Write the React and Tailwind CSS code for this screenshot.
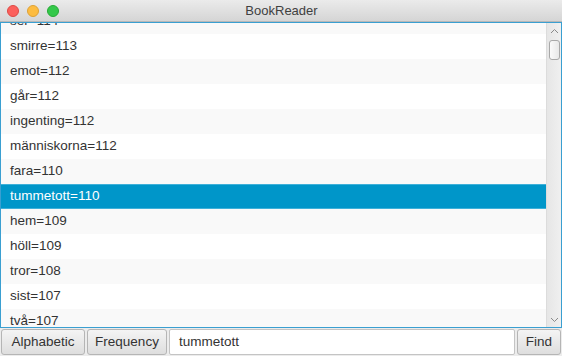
const words = [
  "ser=114",
  "smirre=113",
  "emot=112",
  "går=112",
  "ingenting=112",
  "människorna=112",
  "fara=110",
  "tummetott=110",
  "hem=109",
  "höll=109",
  "tror=108",
  "sist=107",
  "två=107",
];

const App = () => {
  const selected = "tummetott=110";

  return (
    <div
      className="w-[562px] h-[356px] flex flex-col bg-[#ececec] overflow-hidden text-[13.5px] text-[#333]"
      style={{ fontFamily: '"Liberation Sans", Arial, sans-serif' }}
    >
      {/* title bar */}
      <div className="h-[22px] shrink-0 flex items-center bg-gradient-to-b from-[#ebebeb] to-[#d5d5d5] border-b border-[#b8b8b8]">
        <div className="flex items-center gap-[8px] pl-[7px]">
          <span className="w-[12px] h-[12px] rounded-full bg-[#fc605c] border border-[#de4a45]"></span>
          <span className="w-[12px] h-[12px] rounded-full bg-[#fdbc40] border border-[#dea236]"></span>
          <span className="w-[12px] h-[12px] rounded-full bg-[#34c84a] border border-[#27aa35]"></span>
        </div>
        <div className="flex-1 text-center pr-[58px] text-[13px] text-[#404040]">BookReader</div>
      </div>

      {/* list */}
      <div className="h-[306px] shrink-0 flex border border-[#3a9fd1] bg-white">
        <div className="flex-1 overflow-hidden">
          <div className="mt-[-14px]">
            {words.map((w, i) =>
              w === selected ? (
                <div
                  key={w}
                  className="h-[25px] flex items-center pl-[9px] bg-[#0096c9] text-white border-y border-[#3eb0d9]"
                >
                  {w}
                </div>
              ) : (
                <div
                  key={w}
                  className={`h-[25px] flex items-center pl-[9px] ${
                    i % 2 === 0 ? "bg-[#f9f9f9]" : "bg-white"
                  }`}
                >
                  {w}
                </div>
              )
            )}
          </div>
        </div>

        {/* scrollbar */}
        <div className="w-[15px] shrink-0 flex flex-col items-center bg-gradient-to-r from-[#e6e6e6] to-[#f0f0f0] border-l border-[#dcdcdc]">
          <div className="h-[15px] flex items-center justify-center">
            <svg width="9" height="6" viewBox="0 0 9 6">
              <path d="M1 5 L4.5 1.5 L8 5" fill="none" stroke="#8a8a8a" strokeWidth="1" />
            </svg>
          </div>
          <div className="w-[11px] h-[20px] mt-[2px] rounded-[3px] border border-[#a8a8a8] bg-gradient-to-r from-[#fafafa] to-[#e8e8e8]"></div>
          <div className="flex-1"></div>
          <div className="h-[15px] flex items-center justify-center">
            <svg width="9" height="6" viewBox="0 0 9 6">
              <path d="M1 1 L4.5 4.5 L8 1" fill="none" stroke="#8a8a8a" strokeWidth="1" />
            </svg>
          </div>
        </div>
      </div>

      {/* bottom bar */}
      <div className="flex-1 flex items-center gap-[2px] px-[1px]">
        <button className="h-[26px] w-[84px] px-0 rounded-[3px] border border-[#b5b5b5] bg-gradient-to-b from-[#f4f4f4] to-[#dedede] text-[#333]">
          Alphabetic
        </button>
        <button className="h-[26px] w-[80px] px-0 rounded-[3px] border border-[#b5b5b5] bg-gradient-to-b from-[#f4f4f4] to-[#dedede] text-[#333]">
          Frequency
        </button>
        <div className="h-[26px] flex-1 flex items-center pl-[9px] bg-white border border-[#c4c4c4] rounded-[2px] text-[#333]">
          tummetott
        </div>
        <button className="h-[26px] w-[44px] px-0 rounded-[3px] border border-[#b5b5b5] bg-gradient-to-b from-[#f4f4f4] to-[#dedede] text-[#333]">
          Find
        </button>
      </div>
    </div>
  );
};

export default App;
